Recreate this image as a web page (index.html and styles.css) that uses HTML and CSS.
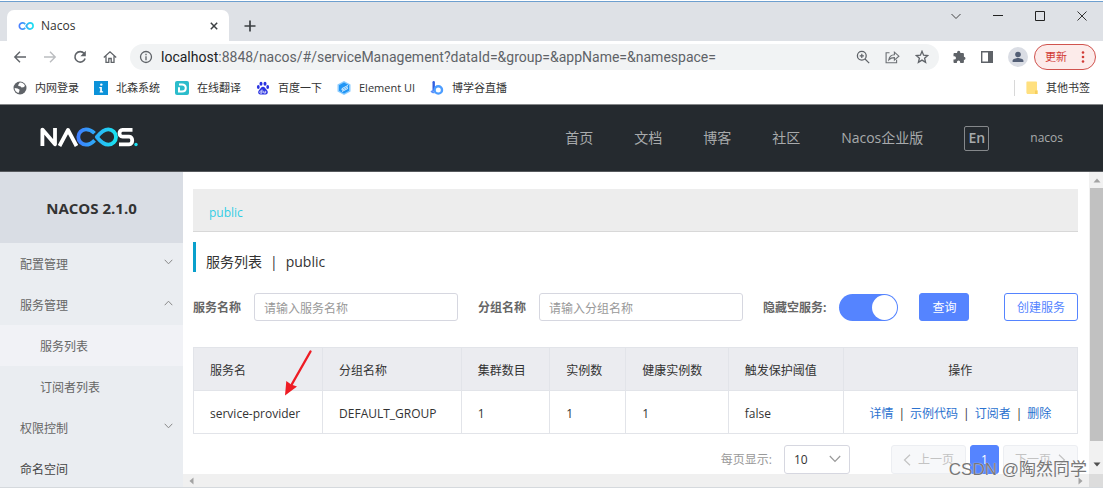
FILE: index.html
```html
<!DOCTYPE html>
<html lang="zh-CN">
<head>
<meta charset="utf-8">
<title>Nacos</title>
<link rel="stylesheet" href="styles.css">
</head>
<body>
<div class="window">
  <div class="tab-strip">
    <div class="tab">
      <svg class="tab-icon" width="16" height="10" viewBox="0 0 16 10"><defs><linearGradient id="inf" x1="0" x2="1"><stop offset="0" stop-color="#4a80ff"/><stop offset="1" stop-color="#1fe0f0"/></linearGradient></defs><path d="M7.200 3.200A3.200 3.200 0 1 0 7.200 6.800M8.200 5C9.200 3.200 10.200 1.900 12 1.900a3.100 3.100 0 0 1 0 6.200c-1.800 0-2.800-1.300-3.800-3.100z" fill="none" stroke="url(#inf)" stroke-width="1.700"/></svg>
      <span class="tab-title">Nacos</span>
      <button class="plain" aria-label="关闭标签页"><svg width="10" height="10" viewBox="0 0 10 10"><path d="M1.800 1.800l6.400 6.400M8.200 1.800L1.800 8.200" stroke="#3c4043" stroke-width="1.500"/></svg></button>
    </div>
    <button class="plain new-tab" aria-label="新标签页"><svg width="12" height="12" viewBox="0 0 12 12"><path d="M6 .5v11M.5 6h11" stroke="#3c4043" stroke-width="1.700"/></svg></button>
    <div class="window-buttons">
      <button class="plain" aria-label="搜索标签页"><svg width="12" height="12" viewBox="0 0 12 12"><path d="M1.500 4L6 8.500 10.500 4" fill="none" stroke="#444" stroke-width="1"/></svg></button>
      <button class="plain" aria-label="最小化"><svg width="12" height="12" viewBox="0 0 12 12"><path d="M1 5.500h10" stroke="#222" stroke-width="1"/></svg></button>
      <button class="plain" aria-label="最大化"><svg width="12" height="12" viewBox="0 0 12 12"><path d="M1.500 1.500h9v9h-9z" fill="none" stroke="#222" stroke-width="1"/></svg></button>
      <button class="plain" aria-label="关闭"><svg width="12" height="12" viewBox="0 0 12 12"><path d="M1.500 1.500l9 9M10.500 1.500l-9 9" stroke="#333" stroke-width="1"/></svg></button>
    </div>
  </div>

  <div class="toolbar">
    <div class="nav-buttons">
      <button class="plain" aria-label="后退"><svg width="14" height="14" viewBox="0 0 14 14"><path d="M13 7H2M7 1.800L1.800 7 7 12.200" fill="none" stroke="#5f6368" stroke-width="1.400"/></svg></button>
      <button class="plain" aria-label="前进"><svg width="14" height="14" viewBox="0 0 14 14"><path d="M1 7h11M7 1.800L12.200 7 7 12.200" fill="none" stroke="#bbbdc0" stroke-width="1.400"/></svg></button>
      <button class="plain" aria-label="重新加载"><svg width="14" height="14" viewBox="0 0 14 14"><path d="M11.200 3.600A5.200 5.200 0 1 0 12.100 8.500" fill="none" stroke="#5f6368" stroke-width="1.600"/><path d="M12.800.8v5.400H7.400z" fill="#5f6368"/></svg></button>
      <button class="plain" aria-label="主页"><svg width="14" height="14" viewBox="0 0 14 14"><path d="M.8 7.400L7 1.800l6.200 5.600M3 6.300v6h2.800V8.500h2.400v3.800H11v-6" fill="none" stroke="#5f6368" stroke-width="1.300"/></svg></button>
    </div>
    <div class="address-bar">
      <svg width="14" height="14" viewBox="0 0 14 14"><circle cx="7" cy="7" r="5.500" fill="none" stroke="#5f6368" stroke-width="1.300"/><path d="M7 6.200v4M7 3.800v1.400" stroke="#5f6368" stroke-width="1.300"/></svg>
      <span class="url"><span class="host">localhost</span>:8848/nacos/#/serviceManagement?dataId=&amp;group=&amp;appName=&amp;namespace=</span>
      <button class="plain" aria-label="缩放"><svg width="14" height="14" viewBox="0 0 14 14"><circle cx="5.800" cy="5.800" r="4.400" fill="none" stroke="#5f6368" stroke-width="1.300"/><path d="M9 9l4.200 4.200M5.800 3.700v4.200M3.700 5.800h4.200" stroke="#5f6368" stroke-width="1.200"/></svg></button>
      <button class="plain" aria-label="分享"><svg width="15" height="14" viewBox="0 0 15 14"><path d="M4.500 2.700H1.100v10h10.500V9.800M3.800 9.800C4.300 6.600 6.400 4.800 9.400 4.700V2.200l4.500 4-4.500 3.900V7.600C7 7.600 5.200 8.200 3.800 9.800z" fill="none" stroke="#6b6f73" stroke-width="1.100"/></svg></button>
      <button class="plain" aria-label="收藏"><svg width="14" height="14" viewBox="0 0 14 14"><path d="M7 1.300l1.600 3.900 4.100.3-3.100 2.700 1 4.100L7 10.100l-3.600 2.200 1-4.100-3.100-2.700 4.100-.3z" fill="none" stroke="#5f6368" stroke-width="1.300"/></svg></button>
    </div>
    <div class="tools">
      <button class="plain" aria-label="扩展程序"><svg width="14" height="14" viewBox="0 0 14 14"><path d="M11.900 6.700V4.100c0-.6-.5-1.100-1.100-1.100H8.300V2.300a1.600 1.600 0 0 0-3.200 0V3H2.600C2 3 1.500 3.500 1.500 4.100v2.100h.8a1.700 1.700 0 0 1 0 3.400h-.8v2.300c0 .6.500 1.100 1.100 1.100h2.300v-.8a1.600 1.600 0 0 1 3.300 0v.8h2.600c.6 0 1.100-.5 1.100-1.100V9.900a1.600 1.600 0 0 0 0-3.200z" fill="#5f6368"/></svg></button>
      <button class="plain" aria-label="侧边栏"><svg width="14" height="14" viewBox="0 0 14 14"><path d="M1.700 1.700h10.600v10.600H1.700z" fill="none" stroke="#5f6368" stroke-width="1.400"/><path d="M8 1.500h4.500v11H8z" fill="#5f6368"/></svg></button>
      <button class="plain avatar" aria-label="用户"><svg width="20" height="20" viewBox="0 0 20 20"><circle cx="10" cy="10" r="10" fill="#dadde4"/><circle cx="10" cy="7.500" r="2.800" fill="#525e75"/><path d="M4.600 15v-1.200c0-1.800 3.600-2.700 5.400-2.700s5.400.9 5.400 2.700V15z" fill="#525e75"/></svg></button>
      <button class="update"><span>更新</span><svg width="4" height="14" viewBox="0 0 4 14"><g fill="#d13a35"><circle cx="2" cy="2.500" r="1.300"/><circle cx="2" cy="7" r="1.300"/><circle cx="2" cy="11.500" r="1.300"/></g></svg></button>
    </div>
  </div>

  <div class="bookmarks">
    <a class="bookmark" href="#"><svg width="14" height="14" viewBox="0 0 14 14"><circle cx="7" cy="7" r="6.500" fill="#5f6368"/><path d="M6.800 1.600c2.500-.2 4.500 1.500 5.200 3.300l-1.500 1.400-2 .2-1.200-1.300-2-.3.100-1.500zM1.600 7l3 .4 2 1.400-.3 1.400-.8 1.700C3.300 11.400 1.600 9.500 1.600 7z" fill="#fff"/></svg><span>内网登录</span></a>
    <a class="bookmark" href="#"><svg width="14" height="14" viewBox="0 0 14 14"><path d="M0 0h14v14H0z" fill="#0c92d9"/><circle cx="7.300" cy="3.600" r="1.200" fill="#fff"/><path d="M5.300 6h2.600v4.300h1.200v1.200H5.700v-1.200h.5V7.200h-.9z" fill="#fff"/></svg><span>北森系统</span></a>
    <a class="bookmark" href="#"><svg width="14" height="14" viewBox="0 0 14 14"><rect width="14" height="14" rx="2" fill="#2bbccb"/><path d="M4 3.500h3c5 0 5 7 0 7H4V6.200" fill="none" stroke="#fff" stroke-width="2"/></svg><span>在线翻译</span></a>
    <a class="bookmark" href="#"><svg width="14" height="14" viewBox="0 0 14 14"><g fill="#2932e1"><ellipse cx="5" cy="2.800" rx="1.500" ry="2"/><ellipse cx="9" cy="2.800" rx="1.500" ry="2"/><ellipse cx="2.300" cy="6" rx="1.400" ry="1.900"/><ellipse cx="11.700" cy="6" rx="1.400" ry="1.900"/><path d="M7 5.800c1.800 0 2.300 1.800 3.600 2.900 1.900 1.600 1.500 4.600-.9 4.800-1.800.1-3.600.1-5.400 0-2.400-.2-2.800-3.200-.9-4.800C4.700 7.600 5.200 5.800 7 5.800z"/></g><path d="M6 8.500v3.600H4.500c-1 0-1-2 0-2H6M7.800 9.800v2.200h1.900V9.800" fill="none" stroke="#fff" stroke-width=".8"/></svg><span>百度一下</span></a>
    <a class="bookmark" href="#"><svg width="14" height="14" viewBox="0 0 14 14"><path d="M7 0l6.500 3.500v7L7 14 .5 10.500v-7z" fill="#8bccff"/><path d="M7 1.500l5 2.700v5.600l-5 2.700-5-2.700V4.200z" fill="#2196f5"/><path d="M11 4.400L5 7.600v1.600l6-3.300M11 7.400l-6 3.100" fill="none" stroke="#d7eeff" stroke-width="1"/></svg><span>Element UI</span></a>
    <a class="bookmark" href="#"><svg width="14" height="14" viewBox="0 0 14 14"><path d="M3.700 1.300v7.500" stroke="#315fe0" stroke-width="2.400" stroke-linecap="round"/><circle cx="8.300" cy="8.900" r="3.700" fill="none" stroke="#4c9dff" stroke-width="2.400"/><path d="M.5 10.200c1.200-.8 2-1.400 3-1.300 0 1.200.3 2.300 1.300 3.300-2 .3-3.500-.2-4.300-2z" fill="#5b90fb"/></svg><span>博学谷直播</span></a>
    <a class="bookmark other" href="#"><svg width="12" height="14" viewBox="0 0 12 14"><path d="M1 .5h9c.6 0 1 .4 1 1v7.700h.5V13H2c-1.100 0-1.600-.6-1.600-1.500V1.500C.4.900.7.500 1 .5z" fill="#ffe07f"/><path d="M9 13V9.500h2.500V13z" fill="#f6cf5e"/></svg><span>其他书签</span></a>
  </div>

  <header class="site-header">
    <a class="logo" href="#" aria-label="NACOS"><svg width="98" height="20" viewBox="0 0 98 20"><defs><linearGradient id="brand" gradientUnits="userSpaceOnUse" x1="37" y1="0" x2="77" y2="0"><stop offset="0" stop-color="#3f7cff"/><stop offset="1" stop-color="#18e5f0"/></linearGradient></defs><g fill="none" stroke-width="3.800" stroke-linejoin="round"><path d="M2.400 19V2.600L15 17.200V1M19.500 19L28 3 36.500 19M92.500 2.800H82.500c-4 0-4 6.900 0 6.900h6.700c4 0 4 7.700 0 7.700H79" stroke="#fff"/><path d="M54.500 6.300C52 3.700 49 2.300 46 2.300a7.700 7.700 0 0 0 0 15.400c3.300 0 6-1.800 8.600-4.400M56.800 10C60 6 63.500 2.300 68.300 2.300a7.700 7.700 0 0 1 0 15.400c-4.800 0-8.300-3.700-11.500-7.700z" stroke="url(#brand)"/></g><circle cx="96" cy="17.500" r="1.700" fill="#18dff0"/></svg></a>
    <nav class="site-nav">
      <a href="#">首页</a><a href="#">文档</a><a href="#">博客</a><a href="#">社区</a><a href="#">Nacos企业版</a>
      <button class="language">En</button>
      <a class="user" href="#">nacos</a>
    </nav>
  </header>

  <div class="page">
    <aside class="sidebar">
      <h1 class="version">NACOS 2.1.0</h1>
      <nav class="menu">
        <a class="menu-item" href="#">配置管理<svg width="9" height="6" viewBox="0 0 9 6"><path d="M.7.8l3.800 4L8.300.8" fill="none" stroke="#888" stroke-width="1"/></svg></a>
        <a class="menu-item" href="#">服务管理<svg width="9" height="6" viewBox="0 0 9 6"><path d="M.7 5.200l3.800-4 3.800 4" fill="none" stroke="#888" stroke-width="1"/></svg></a>
        <a class="menu-item child selected" href="#">服务列表</a>
        <a class="menu-item child" href="#">订阅者列表</a>
        <a class="menu-item" href="#">权限控制<svg width="9" height="6" viewBox="0 0 9 6"><path d="M.7.8l3.800 4L8.300.8" fill="none" stroke="#888" stroke-width="1"/></svg></a>
        <a class="menu-item top" href="#">命名空间</a>
      </nav>
    </aside>

    <main class="content">
      <div class="namespace-bar"><a href="#">public</a></div>
      <h2 class="title"><span>服务列表</span><span>|</span><span>public</span></h2>
      <form class="filters">
        <label for="service">服务名称</label>
        <input class="text-input" id="service" type="text" placeholder="请输入服务名称">
        <label class="spaced" for="group">分组名称</label>
        <input class="text-input" id="group" type="text" placeholder="请输入分组名称">
        <label class="spaced" for="hide-empty">隐藏空服务:</label>
        <input class="switch" id="hide-empty" type="checkbox" role="switch" checked>
        <button class="button primary" type="button">查询</button>
        <button class="button outline" type="button">创建服务</button>
      </form>
      <div class="table-area">
        <table class="services">
          <colgroup><col class="c-name"><col class="c-group"><col class="c-cluster"><col class="c-instance"><col class="c-healthy"><col class="c-protect"><col class="c-action"></colgroup>
          <thead><tr><th>服务名</th><th>分组名称</th><th>集群数目</th><th>实例数</th><th>健康实例数</th><th>触发保护阈值</th><th class="actions">操作</th></tr></thead>
          <tbody><tr><td>service-provider</td><td>DEFAULT_GROUP</td><td>1</td><td>1</td><td>1</td><td>false</td><td class="actions"><a href="#">详情</a><i>|</i><a href="#">示例代码</a><i>|</i><a href="#">订阅者</a><i>|</i><a href="#">删除</a></td></tr></tbody>
        </table>
        <svg class="arrow" width="30" height="48" viewBox="0 0 30 48"><path d="M26.500 2.500L8 35" stroke="#ee1c24" stroke-width="2.400" stroke-linecap="round"/><path d="M1 46.500L2.300 32l4.900 3.500 5.800 2z" fill="#ee1c24"/></svg>
      </div>
      <div class="pagination">
        <label for="size">每页显示:</label>
        <span class="select-box"><select id="size"><option>10</option></select><svg width="12" height="8" viewBox="0 0 12 8"><path d="M.8 1L6 6.500 11.200 1" fill="none" stroke="#999" stroke-width="1.200"/></svg></span>
        <button class="page-button step" disabled><svg width="8" height="12" viewBox="0 0 8 12"><path d="M7 .8L1.500 6 7 11.200" fill="none" stroke="#c3c3c3" stroke-width="1.200"/></svg>上一页</button>
        <button class="page-button current">1</button>
        <button class="page-button step" disabled>下一页<svg width="8" height="12" viewBox="0 0 8 12"><path d="M1 .8L6.500 6 1 11.200" fill="none" stroke="#c3c3c3" stroke-width="1.200"/></svg></button>
      </div>
    </main>

    <div class="scroll-v"><svg width="8" height="5" viewBox="0 0 8 5"><path d="M4 .5L7.500 4.500h-7z" fill="#a3a3a3"/></svg><div class="thumb"></div><svg width="8" height="5" viewBox="0 0 8 5"><path d="M4 4.500L.5.500h7z" fill="#505050"/></svg></div>
    <div class="scroll-h"><svg width="5" height="8" viewBox="0 0 5 8"><path d="M.5 4L4.500.5v7z" fill="#a3a3a3"/></svg><svg width="5" height="8" viewBox="0 0 5 8"><path d="M4.500 4L.5.500v7z" fill="#a3a3a3"/></svg></div>
    <div class="scroll-corner"></div>
  </div>
  <div class="watermark">CSDN @陶然同学</div>
</div>
</body>
</html>
```

FILE: styles.css
```css
* { box-sizing: border-box; }
body {
  margin: 0;
  font-family: "Open Sans", "Noto Sans CJK SC", sans-serif;
  font-size: 12px;
  line-height: 16px;
  color: #333;
  background: #fff;
}
a { color: inherit; text-decoration: none; }
svg { display: block; flex: none; }
button, input, select { font: inherit; color: inherit; }
.plain { padding: 0; border: 0; background: none; }
.window {
  position: relative;
  display: flex;
  flex-direction: column;
  min-height: 100vh;
  overflow: hidden;
  border-bottom: 1px solid #d5d9dd;
}

/* Browser frame */
.tab-strip {
  display: flex;
  height: 41px;
  padding: 9px 15px 0 7px;
  background: #dee1e6;
  border-top: 1px solid #fff;
  box-shadow: inset 0 1px #6d9fcf;
}
.tab {
  display: flex;
  align-items: center;
  gap: 7px;
  width: 222px;
  padding: 0 10px 0 11px;
  background: #fff;
  border-radius: 7px 7px 0 0;
}
.tab-title { flex: 1; }
.new-tab { margin-left: 15px; }
.window-buttons {
  display: flex;
  align-items: flex-start;
  gap: 30px;
  margin-left: auto;
}
.toolbar {
  display: flex;
  align-items: center;
  padding: 3px 7px 3px 13px;
}
.nav-buttons { display: flex; gap: 16px; width: 117px; }
.address-bar {
  display: flex;
  flex: 1;
  align-items: center;
  gap: 15px;
  height: 26px;
  padding: 0 10px 0 9px;
  background: #f1f3f4;
  border-radius: 13px;
}
.url {
  flex: 1;
  margin-left: -7px;
  font-family: Roboto, sans-serif;
  font-size: 14px;
  color: #5f6368;
  white-space: nowrap;
}
.host { color: #202124; }
.tools { display: flex; align-items: center; gap: 14px; padding-left: 13px; }
.avatar { margin-right: -8px; }
.update {
  display: flex;
  align-items: center;
  justify-content: space-between;
  width: 62px;
  height: 26px;
  padding: 0 10px;
  font-size: 11px;
  color: #d13a35;
  background: #fcebea;
  border: 1px solid #d0534e;
  border-radius: 13px;
}
.bookmarks {
  display: flex;
  align-items: center;
  gap: 15px;
  height: 31px;
  padding: 0 13px 2px;
  font-size: 11px;
}
.bookmark { display: flex; align-items: center; gap: 8px; white-space: nowrap; }
.other { margin-left: auto; padding-left: 11px; border-left: 1px solid #d8d8d8; }

/* Site header */
.site-header {
  display: flex;
  align-items: center;
  justify-content: space-between;
  height: 68px;
  padding: 0 40px;
  background: #252a2f;
  border-top: 1px solid #858789;
  border-bottom: 1px solid #56595d;
}
.logo { padding-bottom: 3px; }
.site-nav {
  display: flex;
  align-items: center;
  gap: 41px;
  font-size: 14px;
  color: #a8aaac;
}
.language {
  width: 25px;
  height: 25px;
  padding: 0;
  font-weight: 600;
  background: none;
  border: 1px solid #85888b;
  border-radius: 2px;
}
.user { font-size: 12px; }

/* Page */
.page {
  display: grid;
  flex: 1;
  grid-template-columns: 183px minmax(0, 1fr) 14px;
  grid-template-rows: 1fr 13px;
}
.sidebar { grid-row: 1 / 3; background: #eaedf1; }
.version {
  margin: 0;
  padding: 28px 0 27px;
  font-size: 15px;
  font-weight: 700;
  text-align: center;
  background: #d9dde4;
}
.menu { display: flex; flex-direction: column; height: 244px; overflow: hidden; }
.menu-item {
  display: flex;
  flex: none;
  align-items: center;
  justify-content: space-between;
  height: 41px;
  padding: 2px 10px 0 20px;
  color: #666;
}
.menu-item svg { margin-bottom: 5px; }
.child { padding-left: 40px; }
.selected { background: #f1f2f6; }
.top { color: #444; }

.content { padding: 17px 11px 0 10px; }
.namespace-bar {
  padding: 16px 16px 10px;
  color: #33cde5;
  background: #ededed;
  border-bottom: 1px solid #d8d8d8;
}
.title {
  display: flex;
  gap: 8px;
  align-items: center;
  height: 30px;
  margin: 10px 0 21px;
  padding: 9px 0 0 10px;
  font-size: 14px;
  font-weight: 400;
  border-left: 3px solid #09a0cc;
}
.filters { display: flex; align-items: center; }
.filters label {
  margin-right: 13px;
  padding-top: 2px;
  font-weight: 700;
  color: #666;
  white-space: nowrap;
}
.filters .spaced { margin-left: 20px; }
.text-input {
  flex: 0 1 204px;
  min-width: 0;
  height: 28px;
  padding: 2px 9px 0;
  background: #fff;
  border: 1px solid #d6d7e0;
  border-radius: 3px;
}
.text-input::placeholder { color: #999; opacity: 1; }
.switch {
  display: flex;
  justify-content: flex-end;
  width: 59px;
  height: 27px;
  margin: 0 21px 0 0;
  padding: 1px;
  appearance: none;
  background: #5584ff;
  border-radius: 14px;
}
.switch::after { width: 25px; height: 25px; content: ""; background: #fff; border-radius: 50%; }
.button { height: 28px; padding: 2px 12px 0; border: 1px solid #5584ff; border-radius: 3px; white-space: nowrap; }
.primary { color: #fff; background: #5584ff; }
.outline { margin-left: auto; color: #5584ff; background: #fff; }

.table-area { position: relative; margin-top: 26px; }
.services { width: 100%; border-collapse: collapse; table-layout: fixed; }
.services th, .services td {
  height: 43px;
  padding: 4px 0 0 16px;
  font-weight: 400;
  text-align: left;
  border: 1px solid #e2e4e9;
  white-space: nowrap;
}
.services th { background: #ebecf0; }
.services .actions { padding-left: 0; text-align: center; }
.actions a { color: #2b72cf; }
.actions i { padding: 0 5px; font-style: normal; }
.c-name { width: 14.6%; }
.c-group { width: 15.7%; }
.c-cluster { width: 10%; }
.c-instance { width: 8.6%; }
.c-healthy { width: 11.6%; }
.c-protect { width: 13%; }
.c-action { width: 26.5%; }
.arrow { position: absolute; top: 2px; left: 91px; }

.pagination {
  display: flex;
  align-items: center;
  justify-content: flex-end;
  gap: 4px;
  padding-top: 11px;
}
.pagination label { margin-right: 8px; color: #999; }
.select-box { position: relative; width: 66px; margin-right: 37px; }
.select-box select {
  display: block;
  width: 100%;
  height: 29px;
  padding: 0 9px;
  appearance: none;
  background: #fff;
  border: 1px solid #d6d7e0;
  border-radius: 3px;
}
.select-box svg { position: absolute; top: 10px; right: 9px; pointer-events: none; }
.page-button { height: 29px; padding: 0; border: 1px solid #eceef2; border-radius: 3px; }
.step {
  display: flex;
  align-items: center;
  justify-content: center;
  gap: 7px;
  width: 75px;
  color: #c3c3c3;
  background: #f7f8fa;
}
.current { width: 29px; color: #fff; background: #5584ff; border-color: #5584ff; }

.scroll-v {
  display: flex;
  flex-direction: column;
  align-items: center;
  gap: 5px;
  padding: 6px 0 7px 1px;
  background: #f1f1f1;
}
.thumb { flex: 1; width: 100%; margin-bottom: 16px; background: #c1c1c1; }
.scroll-h {
  display: flex;
  grid-column: 2;
  align-items: center;
  justify-content: space-between;
  padding: 0 6px;
  background: #f0f0f0;
}
.scroll-corner { grid-column: 3; background: #dcdcdc; }
.watermark {
  position: absolute;
  right: 16px;
  bottom: 7px;
  font-family: "Liberation Sans", "Noto Sans CJK SC", sans-serif;
  font-size: 17px;
  line-height: 20px;
  color: #777;
  text-shadow: 0 0 1px #fff;
}
```
